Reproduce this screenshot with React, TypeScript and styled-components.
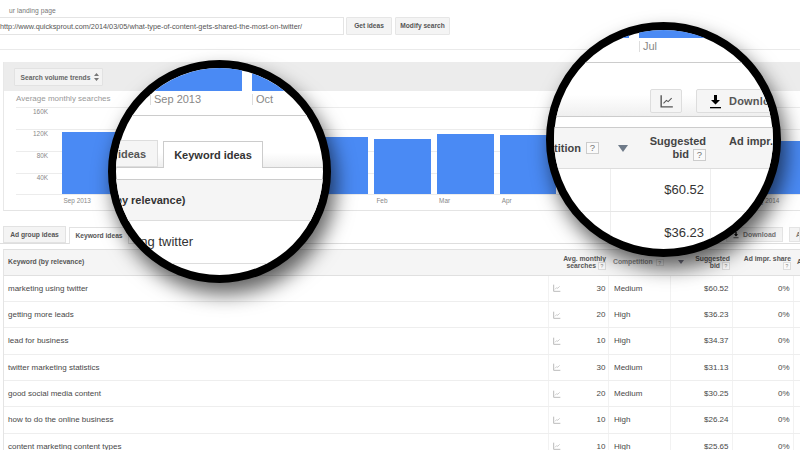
import React from "react";
import styled, { createGlobalStyle } from "styled-components";

const Global = createGlobalStyle`
  html, body { margin: 0; padding: 0; width: 800px; height: 450px; overflow: hidden; background: #fff; }
  body { font-family: "Liberation Sans", Arial, sans-serif; color: #555; }
  * { box-sizing: border-box; }
`;

const Page = styled.div`
  position: relative;
  width: 800px;
  height: 450px;
  overflow: hidden;
`;

const LandingLabel = styled.div`
  height: 17px;
  padding: 6.500px 0 0 9px;
  font-size: 6.7px;
  line-height: 8px;
  letter-spacing: 0.05px;
  color: #777;
`;

const SearchRow = styled.div`
  display: flex;
  height: 18px;
`;

const UrlInput = styled.div`
  width: 344px;
  height: 18px;
  border: 1px solid #e4e4e4;
  border-left: 0;
  font-size: 7.3px;
  line-height: 17px;
  color: #555;
  white-space: nowrap;
  overflow: hidden;
`;

const SmallButton = styled.div<{ $w: number; $ml: number }>`
  width: ${(p) => p.$w}px;
  margin-left: ${(p) => p.$ml}px;
  height: 18px;
  background: #f4f4f4;
  border: 1px solid #e6e6e6;
  border-radius: 1px;
  font-size: 6.6px;
  font-weight: 700;
  line-height: 16px;
  text-align: center;
  color: #555;
  white-space: nowrap;
`;

const Rule = styled.div`
  height: 1px;
  margin-top: 14px;
  background: #eaeaea;
`;

const ChartPanel = styled.section`
  width: 830px;
  height: 149px;
  margin: 12px 0 0 3px;
  border-bottom: 1px solid #e4e4e4;
  border-left: 1px solid #e8e8e8;
`;

const ChartToolbar = styled.div`
  height: 29px;
  padding: 6px 0 0 10px;
  background: #ececec;
`;

const TrendSelect = styled.div`
  display: flex;
  align-items: center;
  gap: 4px;
  width: 89px;
  height: 18px;
  padding-left: 5.5px;
  background: #f3f3f3;
  border: 1px solid #e2e2e2;
  border-radius: 1px;
  font-size: 6.7px;
  font-weight: 700;
  color: #666;
`;

const AvgLabel = styled.div`
  height: 16px;
  padding: 3px 0 0 12px;
  font-size: 8px;
  line-height: 9px;
  color: #999;
`;

const Plot = styled.div`
  display: flex;
  align-items: flex-end;
  height: 88px;
  margin-left: 12px;
  background: repeating-linear-gradient(#ececec 0, #ececec 1px, transparent 1px, transparent 22px);
  border-bottom: 1px solid #ececec;
`;

const YAxis = styled.div`
  flex: none;
  align-self: flex-start;
  width: 32px;
  margin-right: 13.5px;
`;

const YLabel = styled.div`
  height: 22px;
  padding-top: 1px;
  font-size: 6.4px;
  line-height: 8px;
  text-align: right;
  color: #888;
`;

const Bars = styled.div`
  display: flex;
  align-items: flex-end;
  gap: 6px;
  height: 88px;
`;

const Bar = styled.div<{ $h: number }>`
  flex: none;
  width: 56.6px;
  height: ${(p) => p.$h}px;
  background: #4a8af4;
`;

const MonthRow = styled.div`
  display: flex;
  gap: 6px;
  padding: 1px 0 0 57.5px;
`;

const MonthLabel = styled.div`
  flex: none;
  width: 56.6px;
  padding-left: 2px;
  font-size: 6.4px;
  line-height: 10px;
  color: #888;
  white-space: nowrap;
`;

const TabsBar = styled.div`
  display: flex;
  align-items: flex-end;
  height: 17px;
  margin-top: 16px;
  padding-left: 3px;
  border-bottom: 1px solid #dedede;
`;

const Tab = styled.div<{ $active?: boolean; $w: number }>`
  width: ${(p) => p.$w}px;
  height: 17px;
  margin-right: 3px;
  margin-bottom: ${(p) => (p.$active ? "-1px" : "0")};
  background: ${(p) => (p.$active ? "#fff" : "#f4f4f4")};
  border: 1px solid #e2e2e2;
  border-bottom: ${(p) => (p.$active ? "0" : "1px solid #e2e2e2")};
  font-size: 6.7px;
  font-weight: 700;
  line-height: 16px;
  text-align: center;
  color: #555;
  white-space: nowrap;
`;

const TabsSpacer = styled.div`
  flex: 1;
`;

const TabButton = styled.div<{ $w: number }>`
  display: flex;
  align-items: center;
  gap: 4px;
  flex: none;
  width: ${(p) => p.$w}px;
  height: 15px;
  margin: 0 0 1px 6px;
  padding-left: 6px;
  background: #f4f4f4;
  border: 1px solid #e4e4e4;
  font-size: 6.9px;
  font-weight: 700;
  color: #777;
  white-space: nowrap;
  overflow: hidden;
`;

const Table = styled.div`
  width: 840px;
  margin: 5px 0 0 3px;
  border-top: 1px solid #e0e0e0;
  border-left: 1px solid #e4e4e4;
`;

const HeadRow = styled.div`
  display: grid;
  grid-template-columns: 544px 60px 62px 62px 61px 50px;
  height: 25.5px;
  background: #f5f5f5;
  border-bottom: 1px solid #e0e0e0;
  font-size: 6.8px;
  font-weight: 700;
  line-height: 7.7px;
  color: #555;
`;

const HeadCell = styled.div<{ $align?: string }>`
  display: flex;
  flex-direction: column;
  justify-content: center;
  align-items: ${(p) => p.$align || "flex-end"};
  padding: 0 2px 0 4px;
  white-space: nowrap;
`;

const HeadLine = styled.span`
  display: flex;
  align-items: center;
  gap: 2px;
`;

const Help = styled.span`
  display: inline-block;
  flex: none;
  width: 8px;
  height: 7.5px;
  background: #fafafa;
  border: 1px solid #ddd;
  font-size: 5px;
  line-height: 6px;
  font-weight: 400;
  text-align: center;
  color: #888;
`;

const KeywordHead = styled(HeadCell)`
  padding-left: 4px;
`;

const CompetitionHead = styled.div`
  display: flex;
  align-items: center;
  gap: 3px;
  padding: 0 0 0 5px;
  color: #888;
  white-space: nowrap;
`;

const SortArrow = styled.span`
  display: inline-block;
  margin-left: 11px;
  border-left: 3px solid transparent;
  border-right: 3px solid transparent;
  border-top: 4px solid #778;
`;

const DataRow = styled.div`
  display: grid;
  grid-template-columns: 544px 60px 62px 62px 61px 50px;
  height: 26.35px;
  border-bottom: 1px solid #eee;
  font-size: 8px;
  line-height: 25px;
  color: #484848;
`;

const Cell = styled.div<{ $right?: boolean }>`
  padding: 0 ${(p) => (p.$right ? "3.5px" : "5px")} 0 ${(p) => (p.$right ? "0" : "5px")};
  text-align: ${(p) => (p.$right ? "right" : "left")};
  border-left: 1px solid #f2f2f2;
  white-space: nowrap;
`;

const KeywordCell = styled(Cell)`
  padding-left: 4px;
  border-left: 0;
`;

const AvgCell = styled(Cell)`
  display: flex;
  align-items: center;
  justify-content: space-between;
  padding-left: 4px;
  padding-right: 2.5px;
`;

const Lens = styled.div<{ $x: number; $y: number; $d: number }>`
  position: absolute;
  left: ${(p) => p.$x}px;
  top: ${(p) => p.$y}px;
  width: ${(p) => p.$d}px;
  height: ${(p) => p.$d}px;
  overflow: hidden;
  background: #fff;
  border: 8px solid #000;
  border-radius: 50%;
  box-shadow: 5px 11px 20px rgba(0, 0, 0, 0.62);
`;

const LensBand = styled.div<{ $h: number; $w: number }>`
  display: flex;
  gap: 10px;
  height: ${(p) => p.$h}px;
  & > div:first-child { width: ${(p) => p.$w}px; }
`;

const BlueSeg = styled.div`
  flex: none;
  width: 200px;
  background: #4a8af4;
`;

const LensAxis = styled.div<{ $pl: number }>`
  display: flex;
  height: 25px;
  padding: 3px 0 0 ${(p) => p.$pl}px;
  border-bottom: 1px solid #ccc;
`;

const AxisTick = styled.div`
  flex: none;
  width: 102px;
  height: 11px;
  padding-left: 3px;
  border-left: 1px solid #ddd;
  font-size: 11px;
  line-height: 11px;
  color: #888;
  white-space: nowrap;
`;

const LensTabs = styled.div`
  display: flex;
  align-items: flex-end;
  width: 320px;
  height: 27px;
  margin: 25px 0 0 -62px;
  background: linear-gradient(transparent 45%, #efefef);
  border-bottom: 1px solid #ccc;
`;

const LensTab = styled.div<{ $active?: boolean; $w: number }>`
  flex: none;
  width: ${(p) => p.$w}px;
  height: 27px;
  margin-right: 5px;
  margin-bottom: ${(p) => (p.$active ? "-1px" : "0")};
  background: ${(p) => (p.$active ? "#fff" : "#f5f5f5")};
  border: 1px solid ${(p) => (p.$active ? "#ccc" : "#ddd")};
  border-bottom: ${(p) => (p.$active ? "0" : "1px solid #ddd")};
  font-size: 11px;
  font-weight: 700;
  line-height: 26px;
  text-align: center;
  color: ${(p) => (p.$active ? "#333" : "#555")};
  white-space: nowrap;
`;

const LensKeywordHead = styled.div`
  width: 300px;
  height: 42px;
  margin: 11px 0 0 -54px;
  background: #f5f5f5;
  border-top: 1px solid #ccc;
  border-bottom: 1px solid #ddd;
  font-size: 11px;
  font-weight: 700;
  line-height: 41px;
  color: #333;
  white-space: nowrap;
`;

const LensKeywordRow = styled.div`
  width: 300px;
  height: 43px;
  margin-left: -53px;
  border-bottom: 1px solid #ddd;
  font-size: 13px;
  line-height: 42px;
  color: #333;
  white-space: nowrap;
`;

const LensActions = styled.div`
  display: flex;
  height: 54px;
  padding: 26px 0 0 96px;
  background: linear-gradient(transparent 60%, #efefef);
  border-bottom: 1px solid #ccc;
`;

const LensButton = styled.div<{ $w: number; $ml: number }>`
  display: flex;
  align-items: center;
  gap: 7px;
  flex: none;
  width: ${(p) => p.$w}px;
  height: 24px;
  margin-left: ${(p) => p.$ml}px;
  padding-left: ${(p) => (p.$ml ? "12px" : "9px")};
  background: #f5f5f5;
  border: 1px solid #ddd;
  border-radius: 2px;
  font-size: 11px;
  font-weight: 700;
  letter-spacing: 0.2px;
  color: #555;
  white-space: nowrap;
`;

const LensHead = styled.div`
  display: grid;
  grid-template-columns: 57px 100px 120px;
  height: 42px;
  margin-top: 10px;
  background: #f5f5f5;
  border-top: 1px solid #ccc;
  border-bottom: 1px solid #ddd;
  font-size: 11px;
  font-weight: 700;
  line-height: 13px;
  color: #444;
  white-space: nowrap;
`;

const LensCompetition = styled.div`
  display: flex;
  align-items: center;
  justify-content: flex-end;
  gap: 5px;
  padding-right: 12px;
`;

const LensBid = styled.div`
  display: flex;
  align-items: center;
  justify-content: space-between;
  padding: 0 5px 0 7px;
`;

const LensBidLabel = styled.div`
  display: flex;
  flex-direction: column;
  align-items: flex-end;
`;

const LensBidLine = styled.span`
  display: flex;
  align-items: center;
  gap: 4px;
`;

const LensAd = styled.div`
  padding: 7px 0 0 18px;
`;

const LensHelp = styled.span`
  display: inline-block;
  flex: none;
  width: 13px;
  height: 12px;
  background: #fafafa;
  border: 1px solid #ccc;
  font-size: 9.5px;
  line-height: 10px;
  font-weight: 400;
  text-align: center;
  color: #777;
`;

const LensSort = styled.span`
  display: inline-block;
  border-left: 5px solid transparent;
  border-right: 5px solid transparent;
  border-top: 7px solid #6e7a88;
`;

const LensRow = styled.div`
  display: grid;
  grid-template-columns: 57px 100px 120px;
  height: 43px;
  border-bottom: 1px solid #e6e6e6;
  font-size: 13px;
  line-height: 42px;
  color: #333;
`;

const LensCell = styled.div`
  padding-right: 6px;
  text-align: right;
  border-right: 1px solid #eee;
`;

const ChartIcon = ({ size = 8, color = "#aaa" }: { size?: number; color?: string }) => (
  <svg width={size} height={size} viewBox="0 0 12 12" fill="none">
    <path d="M1 1v10h10" stroke={color} strokeWidth="1.2" />
    <path d="M3 8l2.5-2.5 1.5 1L10 3.5" stroke={color} strokeWidth="0.9" />
  </svg>
);

const DownloadIcon = ({ size = 13 }: { size?: number }) => (
  <svg width={size} height={size + 2} viewBox="0 0 13 15">
    <path d="M5 1h3v5h3L6.500 10.500 2 6h3z" fill="#000" />
    <rect x="1" y="13" width="11" height="1.300" fill="#000" />
  </svg>
);

const SortIcon = () => (
  <svg width="5" height="8" viewBox="0 0 5 8">
    <path d="M2.500 0L5 3H0zM2.500 8L0 5h5z" fill="#777" />
  </svg>
);

const yTicks = ["160K", "120K", "80K", "40K"];
const barHeights = [62.5, 58, 58, 58, 57.5, 55.5, 60.5, 59, 58, 56, 56, 53.5];
const months = ["Sep 2013", "", "", "", "", "Feb", "Mar", "Apr", "", "", "", "Aug 2014"];
const rows: [string, string, string, string][] = [
  ["marketing using twitter", "30", "Medium", "$60.52"],
  ["getting more leads", "20", "High", "$36.23"],
  ["lead for business", "10", "High", "$34.37"],
  ["twitter marketing statistics", "30", "Medium", "$31.13"],
  ["good social media content", "20", "Medium", "$30.25"],
  ["how to do the online business", "10", "High", "$26.24"],
  ["content marketing content types", "10", "High", "$25.65"],
];

export default function App() {
  return (
    <Page>
      <Global />
      <LandingLabel>ur landing page</LandingLabel>
      <SearchRow>
        <UrlInput>http://www.quicksprout.com/2014/03/05/what-type-of-content-gets-shared-the-most-on-twitter/</UrlInput>
        <SmallButton $w={46} $ml={2}>Get ideas</SmallButton>
        <SmallButton $w={55} $ml={3}>Modify search</SmallButton>
      </SearchRow>
      <Rule />
      <ChartPanel>
        <ChartToolbar>
          <TrendSelect>
            Search volume trends <SortIcon />
          </TrendSelect>
        </ChartToolbar>
        <AvgLabel>Average monthly searches</AvgLabel>
        <Plot>
          <YAxis>
            {yTicks.map((t) => (
              <YLabel key={t}>{t}</YLabel>
            ))}
          </YAxis>
          <Bars>
            {barHeights.map((h, i) => (
              <Bar key={i} $h={h} />
            ))}
          </Bars>
        </Plot>
        <MonthRow>
          {months.map((m, i) => (
            <MonthLabel key={i}>{m}</MonthLabel>
          ))}
        </MonthRow>
      </ChartPanel>
      <TabsBar>
        <Tab $w={63}>Ad group ideas</Tab>
        <Tab $active $w={60}>Keyword ideas</Tab>
        <TabsSpacer />
        <TabButton $w={57}>
          <DownloadIcon size={6} />
          Download
        </TabButton>
        <TabButton $w={11}>Add</TabButton>
      </TabsBar>
      <Table>
        <HeadRow>
          <KeywordHead $align="flex-start">Keyword (by relevance)</KeywordHead>
          <HeadCell>
            <HeadLine>Avg. monthly</HeadLine>
            <HeadLine>searches <Help>?</Help></HeadLine>
          </HeadCell>
          <CompetitionHead>
            Competition <Help>?</Help>
            <SortArrow />
          </CompetitionHead>
          <HeadCell>
            <HeadLine>Suggested</HeadLine>
            <HeadLine>bid <Help>?</Help></HeadLine>
          </HeadCell>
          <HeadCell>
            <HeadLine>Ad impr. share</HeadLine>
            <HeadLine><Help>?</Help></HeadLine>
          </HeadCell>
          <HeadCell $align="flex-start">Add</HeadCell>
        </HeadRow>
        {rows.map((r) => (
          <DataRow key={r[0]}>
            <KeywordCell>{r[0]}</KeywordCell>
            <AvgCell>
              <ChartIcon />
              {r[1]}
            </AvgCell>
            <Cell>{r[2]}</Cell>
            <Cell $right>{r[3]}</Cell>
            <Cell $right>0%</Cell>
            <Cell />
          </DataRow>
        ))}
      </Table>

      <Lens $x={108} $y={60} $d={223}>
        <LensBand $h={23} $w={126}>
          <BlueSeg />
          <BlueSeg />
        </LensBand>
        <LensAxis $pl={34}>
          <AxisTick>Sep 2013</AxisTick>
          <AxisTick>Oct</AxisTick>
        </LensAxis>
        <LensTabs>
          <LensTab $w={104}>Ad group ideas</LensTab>
          <LensTab $active $w={100}>Keyword ideas</LensTab>
        </LensTabs>
        <LensKeywordHead>Keyword (by relevance)</LensKeywordHead>
        <LensKeywordRow>marketing using twitter</LensKeywordRow>
      </Lens>

      <Lens $x={546} $y={22} $d={235}>
        <LensBand $h={8} $w={75}>
          <BlueSeg />
          <BlueSeg />
        </LensBand>
        <LensAxis $pl={85}>
          <AxisTick>Jul</AxisTick>
        </LensAxis>
        <LensActions>
          <LensButton $w={32} $ml={0}>
            <ChartIcon size={14} color="#555" />
          </LensButton>
          <LensButton $w={120} $ml={14}>
            <DownloadIcon />
            Download
          </LensButton>
        </LensActions>
        <LensHead>
          <LensCompetition>
            Competition <LensHelp>?</LensHelp>
          </LensCompetition>
          <LensBid>
            <LensSort />
            <LensBidLabel>
              <LensBidLine>Suggested</LensBidLine>
              <LensBidLine>bid <LensHelp>?</LensHelp></LensBidLine>
            </LensBidLabel>
          </LensBid>
          <LensAd>Ad impr. share</LensAd>
        </LensHead>
        <LensRow>
          <LensCell />
          <LensCell>$60.52</LensCell>
          <div />
        </LensRow>
        <LensRow>
          <LensCell />
          <LensCell>$36.23</LensCell>
          <div />
        </LensRow>
      </Lens>
    </Page>
  );
}
